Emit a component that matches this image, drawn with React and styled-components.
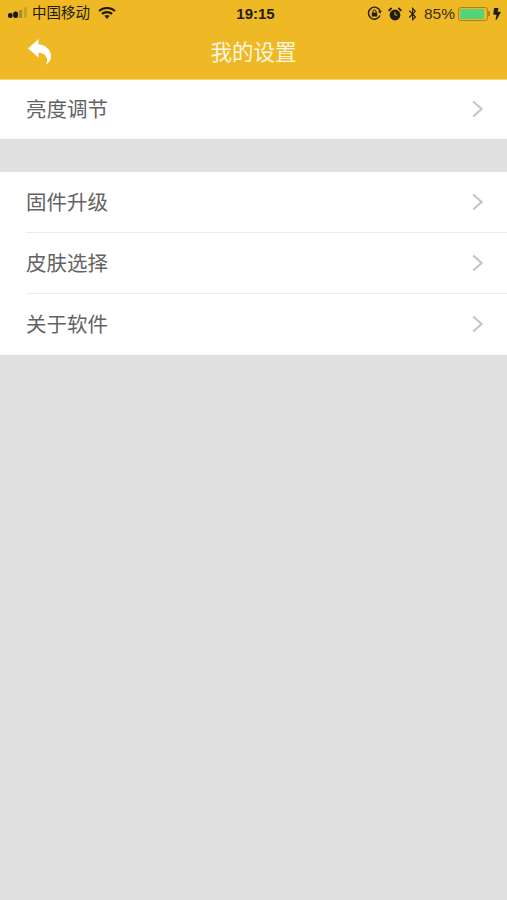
import styled, { createGlobalStyle } from "styled-components";
import { FaBluetoothB, FaBolt } from "react-icons/fa";

const firstGroup = ["亮度调节"];
const secondGroup = ["固件升级", "皮肤选择", "关于软件"];

const Global = createGlobalStyle`
  html, body {
    margin: 0;
    padding: 0;
    background: #e0e0e0;
  }
`;

const SignalBars = () => (
  <SignalIcon width="19" height="11" viewBox="0 0 19 11">
    <rect x="0" y="6" width="4.6" height="5" rx="2" fill="#1a1608" />
    <rect x="5.2" y="4.4" width="4.8" height="6.6" rx="2" fill="#1a1608" />
    <rect x="11" y="3" width="3.2" height="8" rx="1.2" fill="#a98a2a" />
    <rect x="16" y="0" width="3" height="11" rx="1.2" fill="#c9a22c" />
  </SignalIcon>
);

const Wifi = () => (
  <svg width="18" height="12" viewBox="0 0 18 12">
    <path d="M1 4 C5.5 0 12.5 0 17 4" fill="none" stroke="#221c0c" strokeWidth="2.2" />
    <path d="M3.9 6.9 C6.8 4.5 11.2 4.5 14.1 6.9" fill="none" stroke="#221c0c" strokeWidth="2.2" />
    <path d="M6.3 8.8 C8 7.6 10 7.6 11.7 8.8 L9 12 Z" fill="#221c0c" />
  </svg>
);

const BackArrow = () => (
  <svg width="26" height="28" viewBox="0 0 26 28">
    <path
      d="M2 10.5 L12.5 1 L12.5 6.5 C20 6.8 25 12 25 18.5 C25 22 23 25 19.5 27 C21 24.8 21.6 22.6 20.9 20.4 C20 17 17 14.8 12.5 14.8 L12.5 19.5 Z"
      fill="#fff"
    />
  </svg>
);

const RotationLock = () => (
  <svg width="15" height="15" viewBox="0 0 15 15">
    <path d="M13 9.5 A6 6 0 1 1 13.3 5.8" fill="none" stroke="#221c0c" strokeWidth="1.4" />
    <path d="M14.8 4.6 L13.4 7.6 L11 5.4 Z" fill="#221c0c" />
    <rect x="4.8" y="6.6" width="5.4" height="4" rx="0.6" fill="#221c0c" />
    <path d="M5.9 6.8 V5.6 a1.6 1.6 0 0 1 3.2 0 V6.8" fill="none" stroke="#221c0c" strokeWidth="1" />
  </svg>
);

const Alarm = () => (
  <svg width="14" height="14" viewBox="0 0 14 14">
    <circle cx="7" cy="8" r="5.4" fill="#221c0c" />
    <path d="M7 5 V8 H9.4" fill="none" stroke="#c9a22c" strokeWidth="1.1" />
    <path d="M0.6 3.8 L3.6 1 M13.4 3.8 L10.4 1" stroke="#221c0c" strokeWidth="1.8" />
  </svg>
);

const Chevron = () => (
  <ChevronIcon width="11" height="18" viewBox="0 0 11 18">
    <path d="M1.2 1.5 L9.6 9 L1.2 16.5" fill="none" stroke="#c6c6c6" strokeWidth="2.2" />
  </ChevronIcon>
);

const App = () => (
  <Screen>
    <Global />
    <Header>
      <StatusBar>
        <StatusSide>
          <SignalBars />
          <Carrier>中国移动</Carrier>
          <WifiSlot>
            <Wifi />
          </WifiSlot>
        </StatusSide>
        <Clock>19:15</Clock>
        <StatusRight>
          <StatusIcons>
            <RotationLock />
            <Alarm />
            <Bluetooth />
          </StatusIcons>
          <Percent>85%</Percent>
          <BatteryWrap>
            <Battery>
              <BatteryFill $level={92} />
            </Battery>
            <BatteryCap />
          </BatteryWrap>
          <Charging />
        </StatusRight>
      </StatusBar>
      <NavBar>
        <BackButton>
          <BackArrow />
        </BackButton>
        <Title>我的设置</Title>
      </NavBar>
    </Header>
    <Group>
      {firstGroup.map((label) => (
        <Row key={label} $height={59}>
          <RowInner>
            <Label>{label}</Label>
            <Chevron />
          </RowInner>
        </Row>
      ))}
    </Group>
    <Group $top={33}>
      {secondGroup.map((label, index) => (
        <Row key={label} $height={61}>
          <RowInner $divider={index < secondGroup.length - 1}>
            <Label>{label}</Label>
            <Chevron />
          </RowInner>
        </Row>
      ))}
    </Group>
  </Screen>
);

const Screen = styled.div`
  width: 507px;
  height: 900px;
  background: #e0e0e0;
  overflow: hidden;
  font-family: "Liberation Sans", "Noto Sans CJK SC", sans-serif;
`;

const Header = styled.div`
  background: #efb925;
  height: 79px;
  border-bottom: 1px solid #f1d678;
`;

const StatusBar = styled.div`
  display: grid;
  grid-template-columns: 1fr auto 1fr;
  align-items: center;
  height: 27px;
  padding: 0 6px 0 8px;
  color: #221c0c;
`;

const StatusSide = styled.div`
  display: flex;
  align-items: center;
`;

const StatusRight = styled(StatusSide)`
  justify-content: flex-end;
  gap: 3px;
`;

const StatusIcons = styled.div`
  display: flex;
  align-items: center;
  gap: 6px;
  margin-right: 4px;
`;

const SignalIcon = styled.svg`
  margin-bottom: 2px;
`;

const Bluetooth = styled(FaBluetoothB)`
  width: 9px;
  height: 14px;
  color: #221c0c;
`;

const Charging = styled(FaBolt)`
  width: 8px;
  height: 12px;
  color: #221c0c;
`;

const Carrier = styled.span`
  margin-left: 5px;
  padding-bottom: 4px;
  font-size: 14.5px;
  font-family: "Noto Sans CJK SC", sans-serif;
`;

const WifiSlot = styled.span`
  display: flex;
  margin-left: 8px;
  margin-bottom: 2px;
`;

const Clock = styled.span`
  font-size: 15px;
  font-weight: 700;
  padding: 0 0 1px 2px;
`;

const Percent = styled.span`
  font-size: 15.5px;
  color: #3a3010;
`;

const BatteryWrap = styled.div`
  display: flex;
  align-items: center;
`;

const Battery = styled.div`
  box-sizing: border-box;
  width: 30px;
  height: 14px;
  border: 1px solid #a8821e;
  border-radius: 3px;
  padding: 1px;
`;

const BatteryFill = styled.div`
  width: ${({ $level }) => $level}%;
  height: 100%;
  background: #52d47a;
  border-radius: 1px;
`;

const BatteryCap = styled.div`
  width: 2px;
  height: 5px;
  background: #a8821e;
  border-radius: 0 1px 1px 0;
`;

const NavBar = styled.div`
  position: relative;
  display: flex;
  align-items: center;
  justify-content: center;
  height: 52px;
`;

const BackButton = styled.div`
  position: absolute;
  left: 26px;
  top: 11px;
  display: flex;
`;

const Title = styled.h1`
  margin: 0;
  padding-bottom: 6px;
  color: #fdf6e0;
  font-size: 21.5px;
  font-weight: 400;
  font-family: "Noto Sans CJK SC", sans-serif;
`;

const Group = styled.div`
  margin-top: ${({ $top }) => $top || 0}px;
  background: #fff;
`;

const Row = styled.div`
  height: ${({ $height }) => $height}px;
  padding-left: 26px;
`;

const RowInner = styled.div`
  box-sizing: border-box;
  height: 100%;
  display: flex;
  align-items: center;
  justify-content: space-between;
  padding-right: 24px;
  border-bottom: ${({ $divider }) => ($divider ? "1px solid #ebebeb" : "none")};
`;

const Label = styled.span`
  color: #636363;
  padding-bottom: 3px;
  font-size: 20.5px;
  font-family: "Noto Sans CJK SC", sans-serif;
`;

const ChevronIcon = styled.svg`
  margin-bottom: 1px;
`;

export default App;
